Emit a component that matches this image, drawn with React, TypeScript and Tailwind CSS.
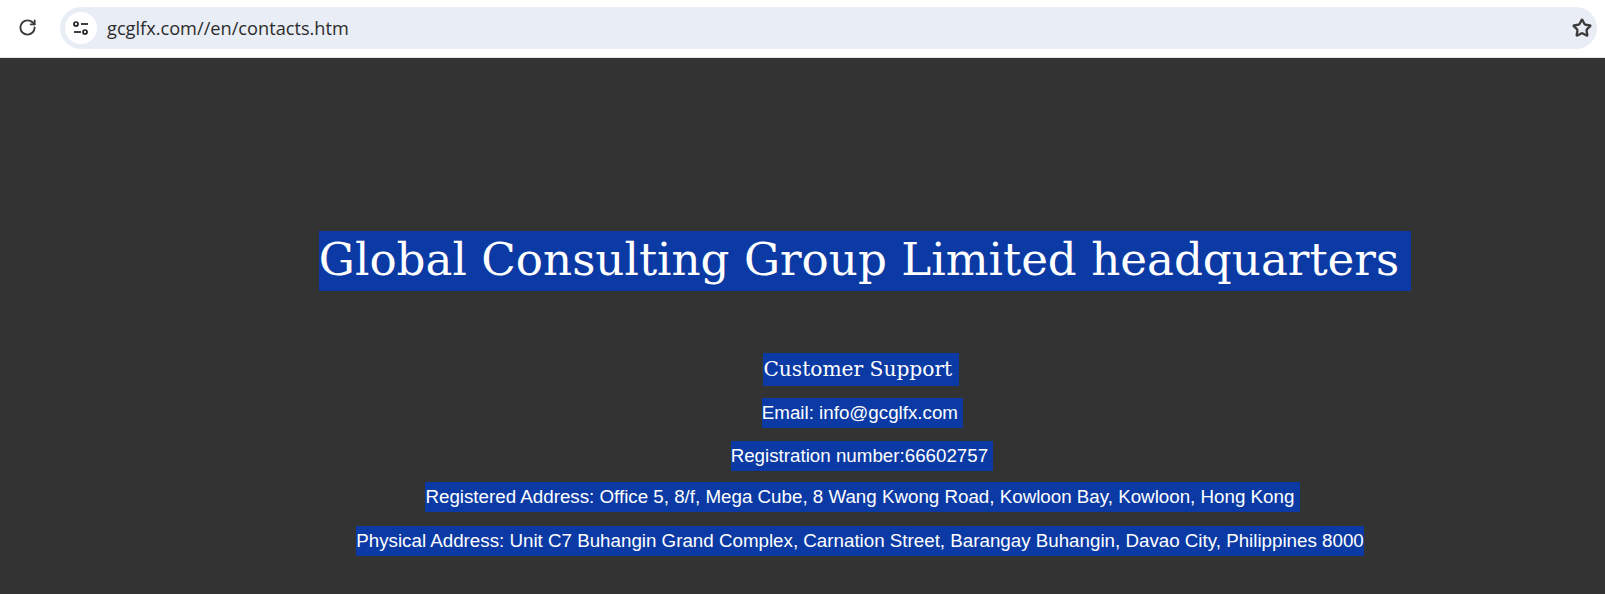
import { RotateCw, Star } from "lucide-react";

const lines = [
    { text: "Email: info@gcglfx.com\u00a0", cls: "mt-3" },
    { text: "Registration number:66602757\u00a0", cls: "mt-[13px] -ml-[1px]" },
    { text: "Registered Address: Office 5, 8/f, Mega Cube, 8 Wang Kwong Road, Kowloon Bay, Kowloon, Hong Kong\u00a0", cls: "mt-[11px]" },
    { text: "Physical Address: Unit C7 Buhangin Grand Complex, Carnation Street, Barangay Buhangin, Davao City, Philippines 8000", cls: "mt-[14px] -ml-[5px]" },
];

export default function App() {
    return (
        <div className="h-[594px] w-[1605px] overflow-hidden bg-[#333333]">
            {/* browser bar */}
            <div className="flex h-[58px] items-start bg-white border-b border-[#e4e4e4] pl-[18px] pr-2 pt-[7px]">
                <RotateCw className="mt-[11px] w-[19px] h-[19px] text-[#3c3c3c] mr-[23px]" strokeWidth={2.4} />
                <div className="flex h-[42px] flex-1 items-center rounded-full bg-[#e9edf6] pl-[5px] pr-[5px]">
                    <div className="flex h-[32px] w-[32px] items-center justify-center rounded-full bg-white">
                        <svg width="18" height="16" viewBox="0 0 18 16" fill="none" stroke="#1f1f1f" strokeWidth="1.7">
                            <circle cx="4" cy="4" r="2" />
                            <path d="M9 4h7" />
                            <path d="M2 12h7" />
                            <circle cx="13" cy="12" r="2" />
                        </svg>
                    </div>
                    <span className="ml-[10px] flex-1 pt-px font-['Open_Sans',sans-serif] text-[18.2px] text-[#2c2c2c]">gcglfx.com//en/contacts.htm</span>
                    <Star className="w-[20px] h-[20px] text-[#3c3c3c]" strokeWidth={2.8} />
                </div>
            </div>

            {/* contact content */}
            <div className="flex flex-col items-center pl-[120px] pt-[173px]">
                <h1 className="ml-[5px] inline-block h-[60px] bg-[#0b3aa5] pr-3 font-['DejaVu_Serif',serif] text-[45.2px] leading-[58px] text-white whitespace-pre">Global Consulting Group Limited headquarters</h1>
                <h3 className="mt-[62px] -ml-[3px] inline-block h-[33px] bg-[#0b3aa5] font-['DejaVu_Serif',serif] text-[20.2px] leading-[33px] text-white whitespace-pre">Customer Support </h3>
                {lines.map((line) => (
                    <p key={line.text} className={`${line.cls} inline-block h-[30px] bg-[#0b3aa5] font-['Liberation_Sans',sans-serif] text-[18.75px] leading-[30px] text-white`}>
                        {line.text}
                    </p>
                ))}
            </div>
        </div>
    );
}
